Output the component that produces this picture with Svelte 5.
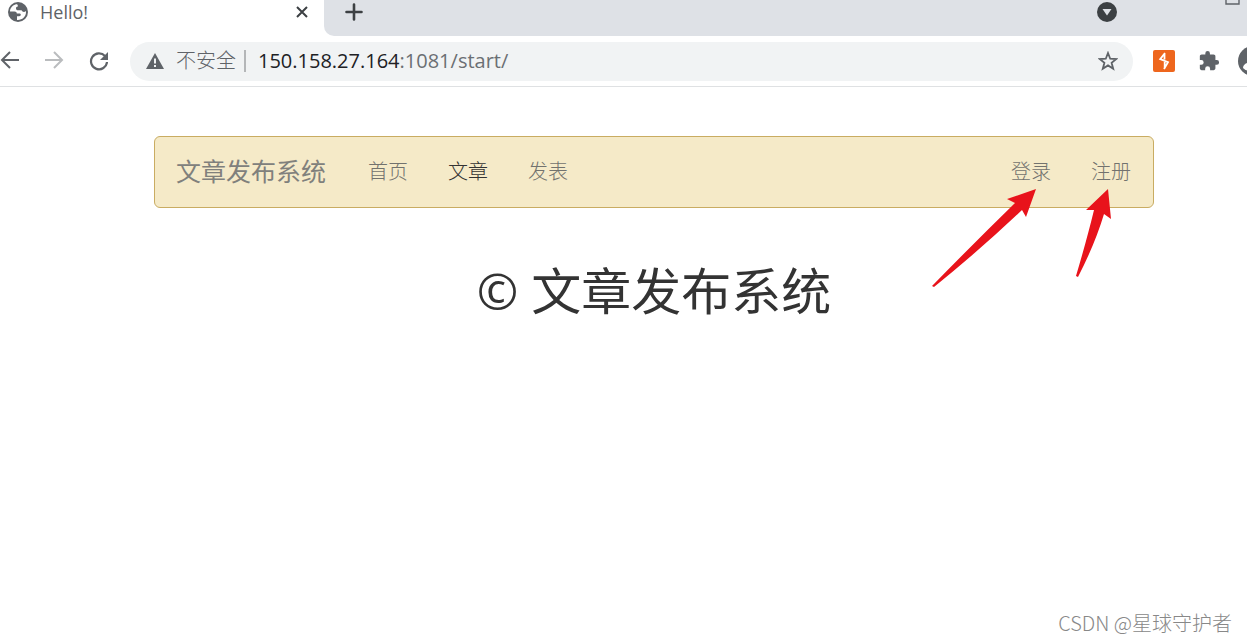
<script>
let url = $state('150.158.27.164:1081/start/')

const host = $derived(url.split(':')[0])
const rest = $derived(url.slice(host.length))

const links = [
  { text: '首页', href: '#index' },
  { text: '文章', href: '#articles', active: true },
  { text: '发表', href: '#publish' }
]
const userLinks = [
  { text: '登录', href: '#login' },
  { text: '注册', href: '#register' }
]
</script>

<div class="window">
  <header>
    <div class="tabs">
      <div class="tab">
        <svg width="20" height="20" viewBox="0 0 20 20" aria-hidden="true">
          <circle cx="10" cy="10" r="10" fill="#5f6368" />
          <path d="M8 2.200C4.600 3 2 6 2 9.500h4.500c1.500 0 2.300.8 2.300 2h2.700c.8 0 1.300.6 1.300 1.300 0 .9-.7 1.400-1.600 1.400H9v3.700c4.800.5 9-3 9-7.900l-.1-1c-1 1-2.400 1.200-3.400.4l-1-1.100H10c-1.200 0-2-.8-2-1.900 0-1 .7-1.800 1.800-1.800V3.400C9.800 2.700 9 2.100 8 2.200z" fill="#fff" />
        </svg>
        <span class="title">Hello!</span>
        <button aria-label="Close tab">
          <svg width="12" height="12" viewBox="0 0 12 12"><path d="M1 1l10 10M11 1L1 11" stroke="#3c4043" stroke-width="2" /></svg>
        </button>
      </div>
      <div class="strip">
        <button aria-label="New tab">
          <svg width="18" height="18" viewBox="0 0 18 18"><path d="M9 1.500v15M1.500 9h15" stroke="#3c4043" stroke-width="2.600" stroke-linecap="round" /></svg>
        </button>
        <button class="search" aria-label="Search tabs">
          <svg width="20" height="20" viewBox="0 0 20 20"><circle cx="10" cy="10" r="10" fill="#3c4043" /><path d="M5.500 7h9L10 13.500z" fill="#dee1e6" /></svg>
        </button>
        <button class="maximize" aria-label="Maximize">
          <svg width="15" height="14" viewBox="0 0 15 14"><path d="M1 1h13v12H1z" fill="none" stroke="#5f6368" stroke-width="1.400" /></svg>
        </button>
      </div>
    </div>

    <div class="toolbar">
      <button aria-label="Back">
        <svg width="20" height="20" viewBox="0 0 20 20"><path d="M19 9H2M10 1L2 9l8 8" fill="none" stroke="#5f6368" stroke-width="2" /></svg>
      </button>
      <button aria-label="Forward" disabled>
        <svg width="20" height="20" viewBox="0 0 20 20"><path d="M1 9h17M10 1l8 8-8 8" fill="none" stroke="#babcbe" stroke-width="2" /></svg>
      </button>
      <button aria-label="Reload">
        <svg width="20" height="20" viewBox="0 0 20 20"><path d="M17 5A8 8 0 1 0 19 11" fill="none" stroke="#5f6368" stroke-width="2.200" /><path d="M20 1v8h-8z" fill="#5f6368" /></svg>
      </button>
      <div class="address">
        <svg width="18" height="16" viewBox="0 0 18 16" aria-hidden="true"><path d="M9 0l9 16H0z" fill="#5f6368" /><path d="M9 5.500v5M9 12v2" stroke="#f1f3f4" stroke-width="2" /></svg>
        <span class="unsafe">不安全</span>
        <a class="url" href="#address"><b>{host}</b>{rest}</a>
        <button aria-label="Bookmark this tab">
          <svg width="20" height="20" viewBox="0 0 20 20"><path d="M10 2l2.200 5.700 6.100.3-4.700 3.800 1.600 5.900L10 14.400l-5.200 3.300 1.600-5.900L1.700 8l6.100-.3z" fill="none" stroke="#5f6368" stroke-width="1.800" /></svg>
        </button>
      </div>
      <div class="extensions">
        <button aria-label="Burp Suite">
          <svg width="22" height="22" viewBox="0 0 22 22"><rect width="22" height="22" rx="2" fill="#ee661d" /><path d="M12 3L7.200 9.200l7.800 3L11 19M11.500 3.500v6M11.700 12v6.500" fill="none" stroke="#fff" stroke-width="1.800" /></svg>
        </button>
        <button aria-label="Extensions">
          <svg width="22" height="22" viewBox="0 0 24 24"><path d="M20.500 11H19V7c0-1.100-.9-2-2-2h-4V3.500a2.500 2.500 0 0 0-5 0V5H4c-1.100 0-2 .9-2 2v3.800h1.500a2.700 2.700 0 0 1 0 5.400H2V20c0 1.100.9 2 2 2h3.800v-1.500a2.700 2.700 0 0 1 5.400 0V22H17c1.100 0 2-.9 2-2v-4h1.500a2.500 2.500 0 0 0 0-5z" fill="#5f6368" /></svg>
        </button>
        <button aria-label="Profile">
          <svg width="30" height="30" viewBox="0 0 30 30"><circle cx="15" cy="15" r="15" fill="#5f6368" /><circle cx="15" cy="10" r="5" fill="#fff" /><path d="M5 22c0-8 20-8 20 0-5 5-15 5-20 0z" fill="#fff" /></svg>
        </button>
      </div>
    </div>
  </header>

  <main>
    <nav>
      <a class="brand" href="#home">文章发布系统</a>
      {#each links as link}
        <a href={link.href} class:active={link.active}>{link.text}</a>
      {/each}
      <div class="user">
        {#each userLinks as link}
          <a href={link.href}>{link.text}</a>
        {/each}
      </div>
      <svg class="arrows" width="180" height="100" viewBox="0 0 180 100" aria-hidden="true">
        <path d="M105 0L95 28l-4-7Q50 60 3 98l-2-1Q43 54 84 14l-8-4z" fill="#e8131b" />
        <path d="M177 0l3 30-7-5Q164 55 147 88l-2-1Q156 50 163 21l-8 0z" fill="#e8131b" />
      </svg>
    </nav>
    <h1>© 文章发布系统</h1>
  </main>
  <div class="watermark">CSDN @星球守护者</div>
</div>

<style>
:global(body) {
  margin: 0;
}

.window {
  position: relative;
  min-height: 100vh;
  overflow: hidden;
  background: #fff;
  font-family: "Open Sans", "Noto Sans CJK SC", sans-serif;
  font-size: 20px;
}

button {
  display: flex;
  flex: none;
  padding: 0;
  border: 0;
  background: none;
}

svg {
  flex: none;
}

a {
  text-decoration: none;
}

/* browser */
.tabs {
  display: flex;
  height: 36px;
}

.tab {
  display: flex;
  align-items: center;
  box-sizing: border-box;
  width: 324px;
  padding: 0 16px 12px 8px;
}

.title {
  flex: 1;
  margin-left: 12px;
  color: #5f6368;
  font-size: 18px;
  line-height: 24px;
}

.strip {
  display: flex;
  flex: 1;
  align-items: center;
  box-sizing: border-box;
  padding: 0 7px 12px 21px;
  border-bottom-left-radius: 10px;
  background: #dee1e6;
}

.search {
  margin-left: auto;
}

.maximize {
  margin: 0 0 28px 108px;
}

.toolbar {
  display: flex;
  align-items: center;
  gap: 24px;
  height: 50px;
  border-bottom: 1px solid #dfe1e3;
}

.address {
  display: flex;
  flex: 1;
  align-items: center;
  height: 39px;
  padding: 0 15px 0 16px;
  margin-left: -2px;
  border-radius: 20px;
  background: #f1f3f4;
}

.unsafe {
  margin-left: 12px;
  padding-right: 8px;
  border-right: 2px solid #b4b6b8;
  color: #5f6368;
  font-weight: 300;
  line-height: 22px;
}

.url {
  flex: 1;
  margin-left: 12px;
  color: #6b6f73;
  line-height: 28px;
}

.url b {
  color: #202124;
  font-weight: 400;
}

.extensions {
  display: flex;
  align-items: center;
  gap: 23px;
  margin: 0 -21px 0 -4px;
}

.extensions button:last-child {
  margin-left: -5px;
}

/* page */
main {
  padding: 49px 93px 0 154px;
}

nav {
  position: relative;
  display: flex;
  align-items: center;
  box-sizing: border-box;
  height: 72px;
  padding: 0 22px 4px 21px;
  border: 1px solid #c9ac62;
  border-radius: 6px;
  background: #f5eac8;
}

nav a {
  margin-right: 40px;
  color: #72726e;
  font-weight: 300;
}

nav .brand {
  margin-right: 42px;
  color: #80807c;
  font-size: 25px;
  font-weight: 400;
}

nav .active {
  color: #333;
}

.user {
  display: flex;
  gap: 40px;
  margin-left: auto;
}

.user a {
  margin-right: 0;
}

.arrows {
  position: absolute;
  top: 52px;
  right: 42px;
}

h1 {
  margin: 45px 0 0;
  color: #333;
  font-size: 50px;
  font-weight: 400;
  line-height: 76px;
  text-align: center;
}

.watermark {
  position: absolute;
  right: 15px;
  bottom: 4px;
  color: #888;
  font-family: "Noto Sans CJK SC", sans-serif;
  font-weight: 300;
  line-height: 30px;
}
</style>
